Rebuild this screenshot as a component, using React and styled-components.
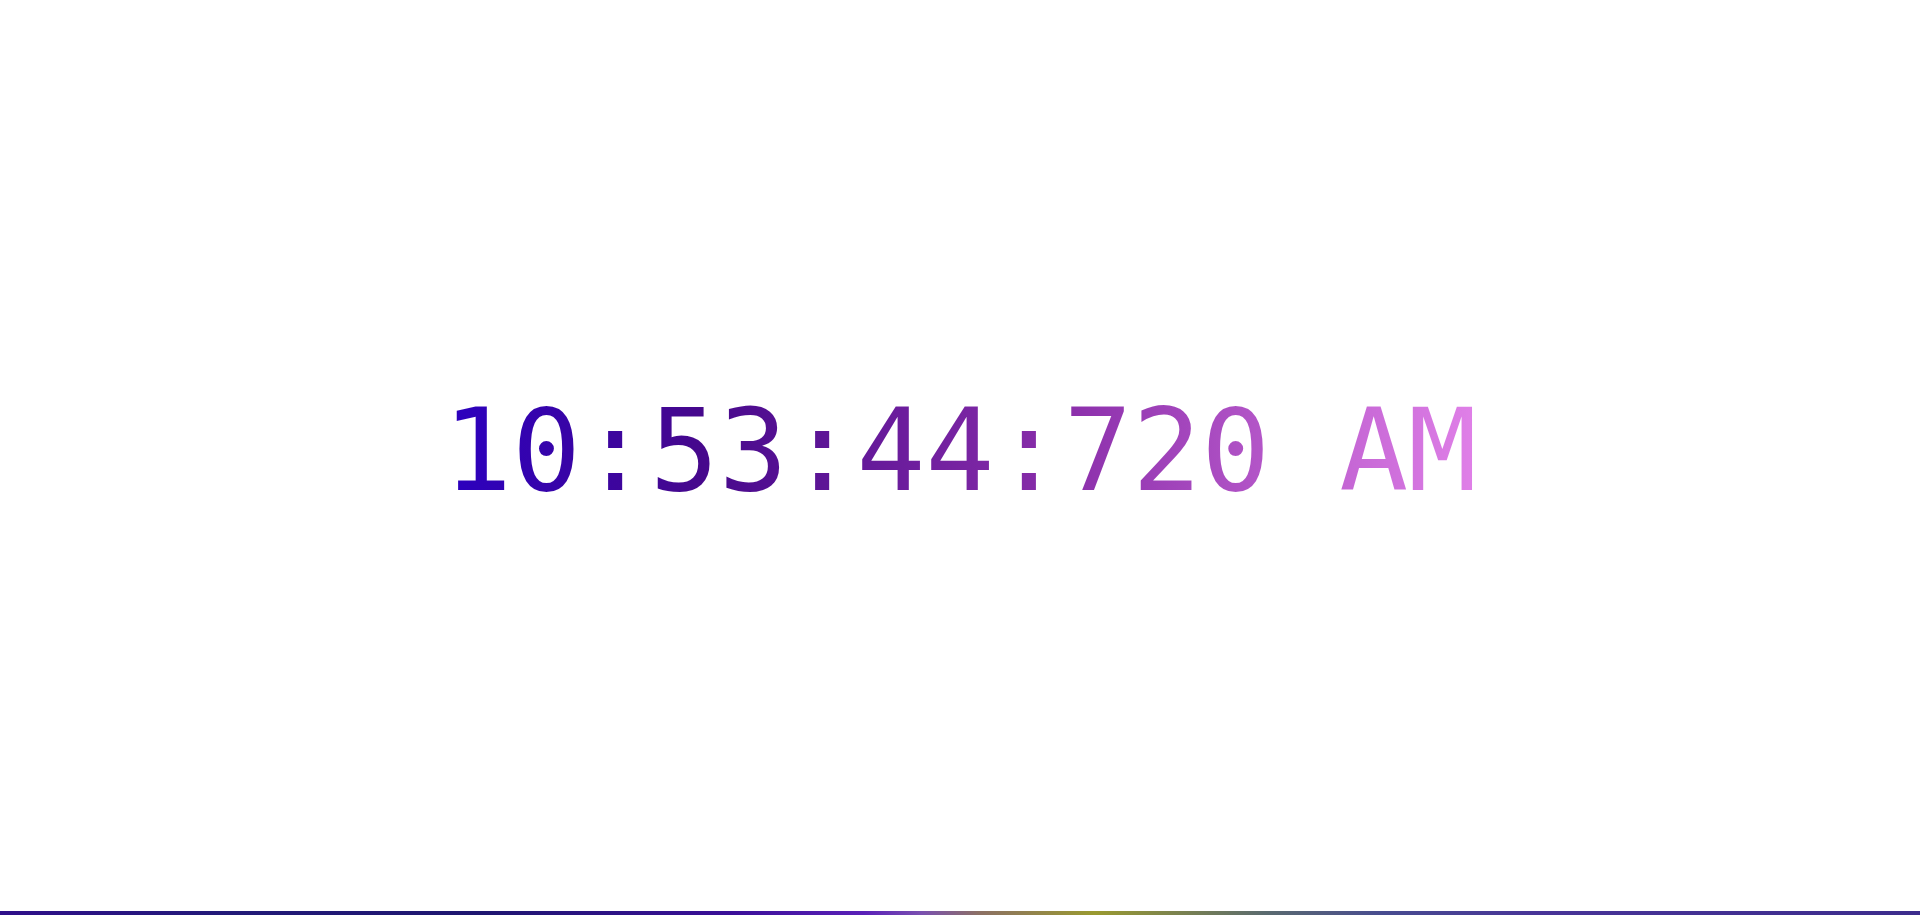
import React from 'react';
import styled, { createGlobalStyle } from 'styled-components';

const GlobalStyle = createGlobalStyle`
  html, body {
    margin: 0;
    padding: 0;
    background: #ffffff;
  }
`;

const Page = styled.div`
  height: 100vh;
  display: flex;
  flex-direction: column;
  background: #ffffff;
`;

const Stage = styled.main`
  flex: 1;
  display: flex;
  align-items: center;
  justify-content: center;
  padding-bottom: 10px;
`;

const Clock = styled.h1`
  margin: 0;
  font-family: "DejaVu Sans Mono", "Noto Sans Mono", monospace;
  font-weight: 400;
  font-size: 114.5px;
  font-variant-numeric: slashed-zero;
  white-space: pre;
  background: linear-gradient(90deg, #2b00c0 0%, #46088c 25%, #8a2eaa 60%, #e080e8 100%);
  -webkit-background-clip: text;
  background-clip: text;
  color: transparent;
`;

const Bar = styled.div`
  height: 4px;
  background: linear-gradient(
    90deg,
    #2f0f8a 0%,
    #221a78 12%,
    #1e1670 25%,
    #3a0f98 38%,
    #5a20b8 45%,
    #7a50b0 48%,
    #8c7064 51%,
    #9a9a30 57%,
    #5a6a70 66%,
    #484c90 72%,
    #483498 80%,
    #3c2c8c 100%
  );
`;

export default function App() {
  return (
    <Page>
      <GlobalStyle />
      <Stage>
        <Clock>10:53:44:720 AM</Clock>
      </Stage>
      <Bar />
    </Page>
  );
}
